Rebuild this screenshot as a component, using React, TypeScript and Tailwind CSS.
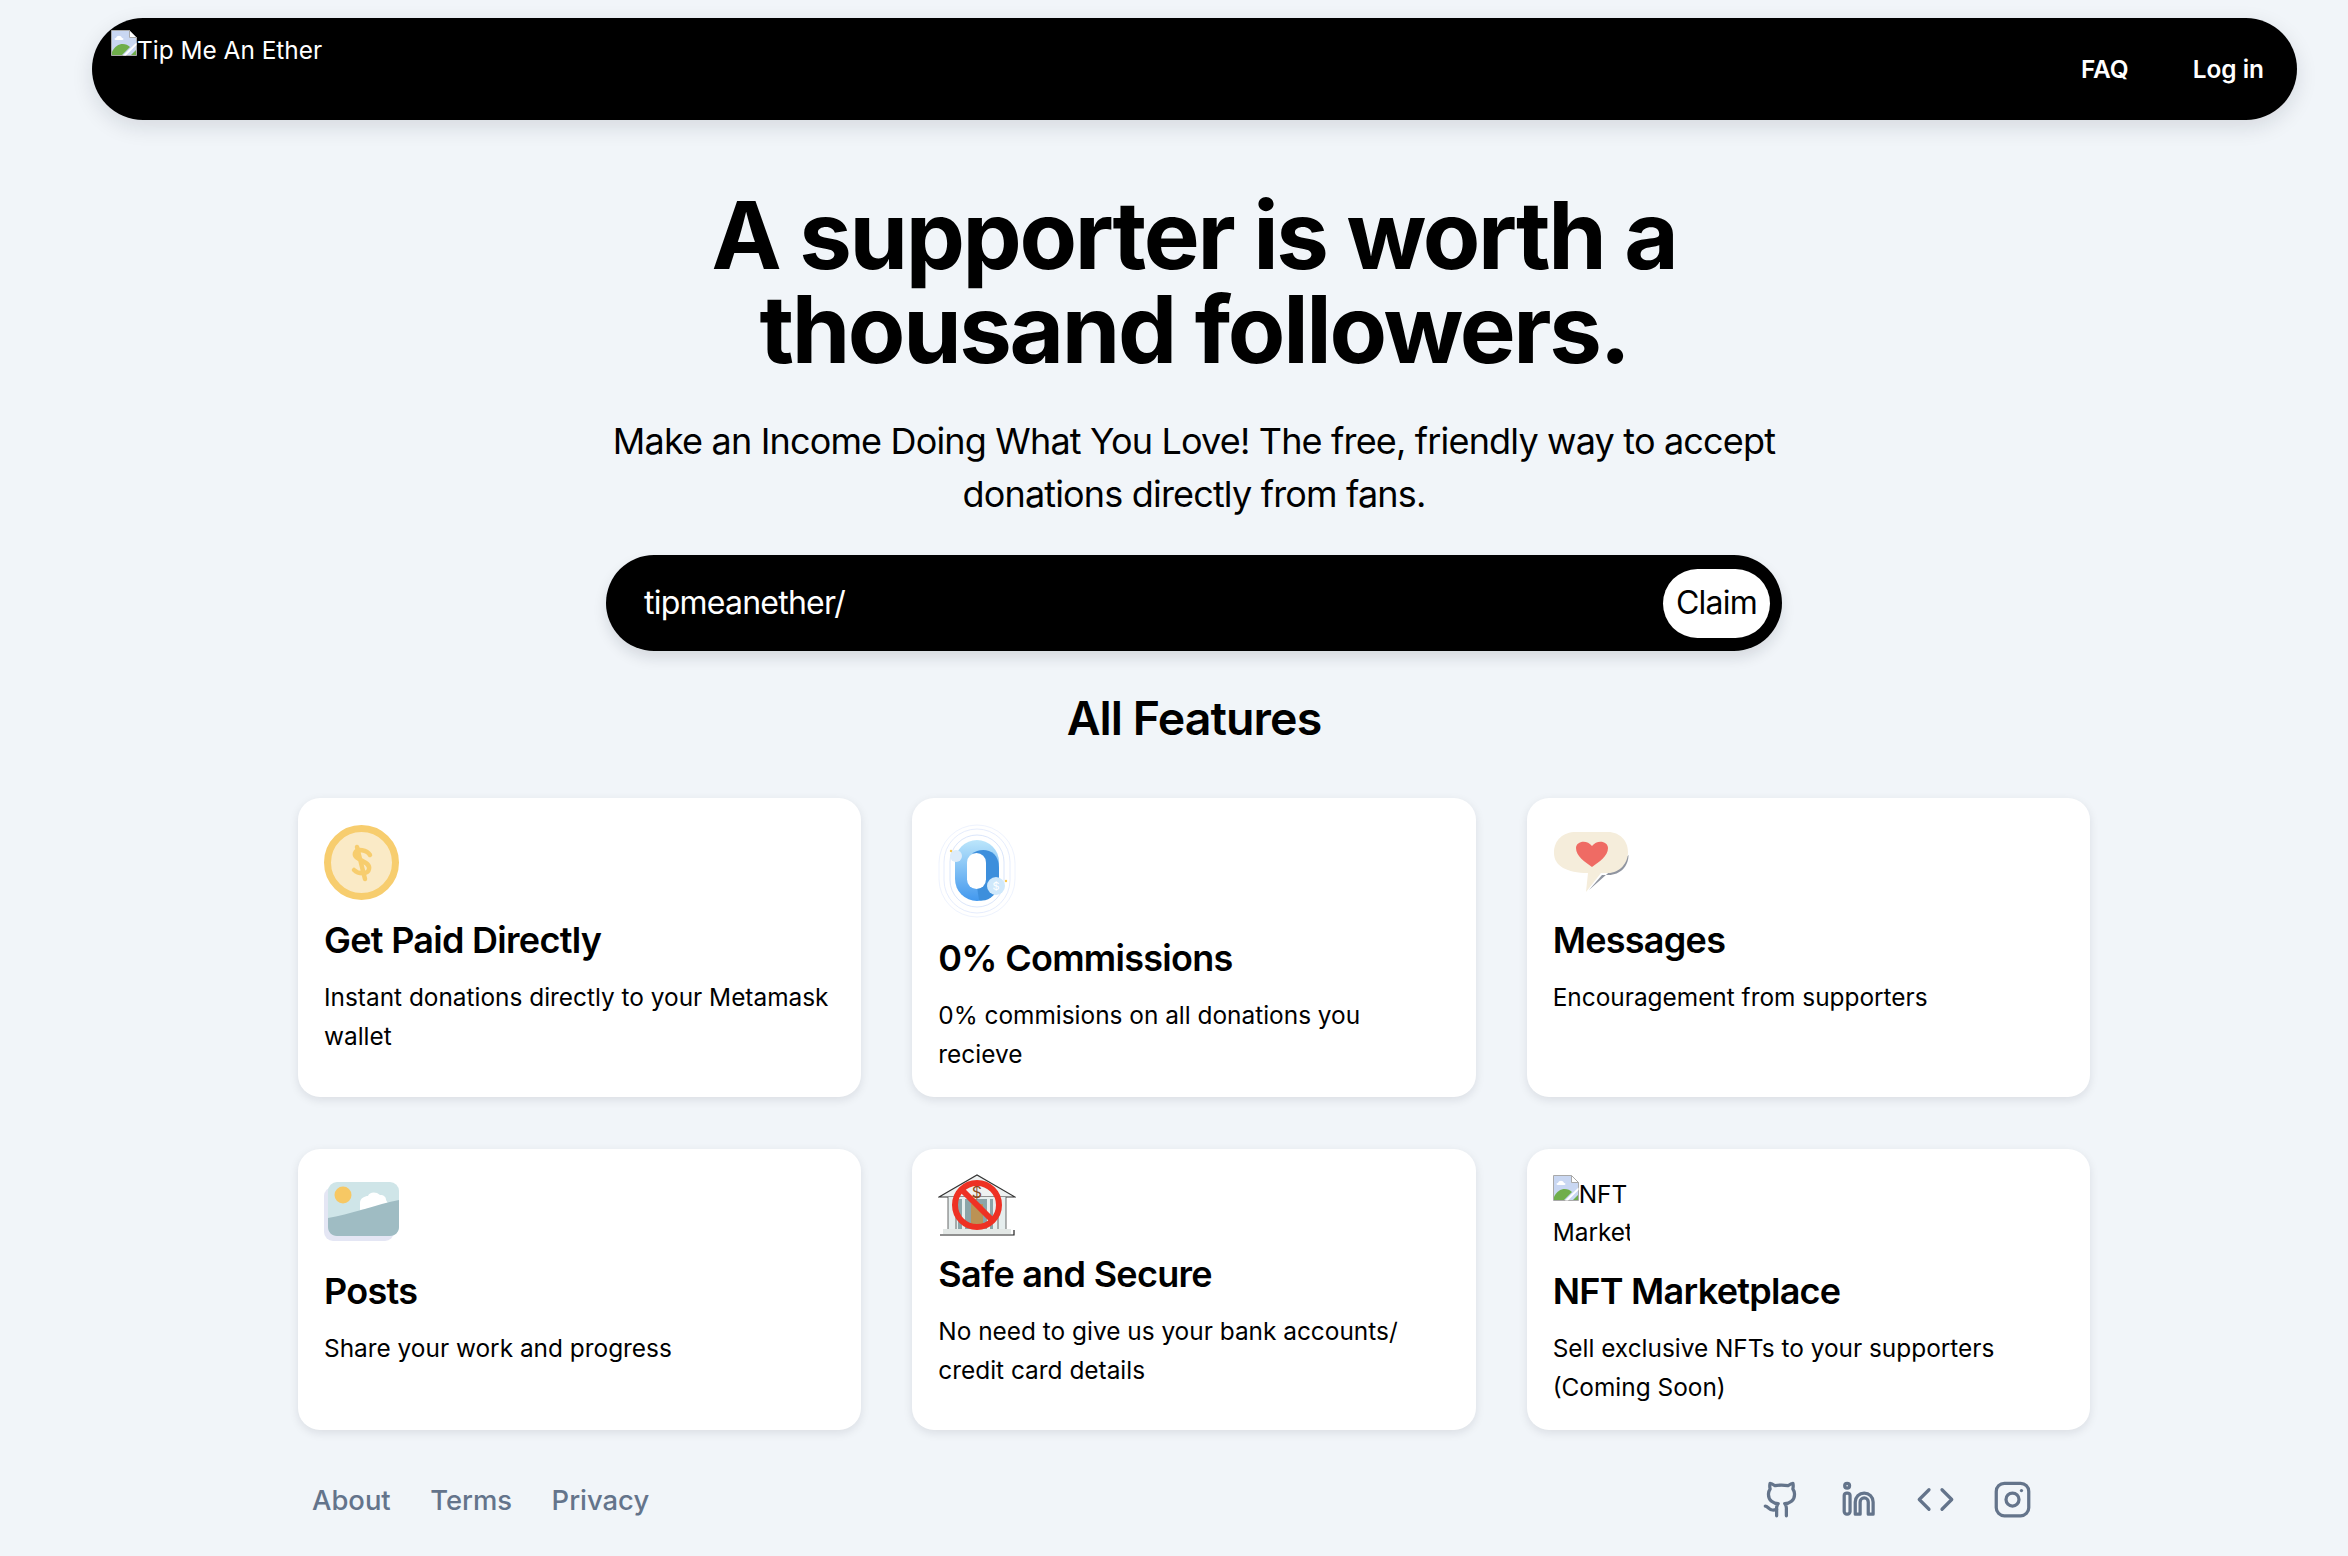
const font = "[font-family:Inter,'Liberation_Sans',sans-serif]";

function BrokenImage() {
  return (
    <svg viewBox="0 0 26 26" className="w-[26px] h-[26px] shrink-0">
      <path d="M.5.5h18l7 7v18H.5z" fill="#c9d7f2" stroke="#a9a9a9" strokeWidth="1" />
      <path d="M18.5.5v7h7z" fill="#fff" stroke="#a9a9a9" strokeWidth="1" />
      <path d="M5 8c1-3 5-3 6 0 2 0 2 2 0 2H5c-2 0-2-2 0-2z" fill="#fff" />
      <path d="M1 25v-3c4-9 13-10 18-5l-8 8z" fill="#6fae4b" />
      <path d="M12 25.5l13.5-13v2.5L15 25.5z" fill="#fff" />
      <path d="M20 25l5-5v5z" fill="#6fae4b" />
    </svg>
  );
}

function CoinIcon() {
  return (
    <svg viewBox="0 0 75 75" className="w-[75px] h-[75px]">
      <circle cx="37.5" cy="37.5" r="34" fill="#faeac6" stroke="#f7cd6e" strokeWidth="7" />
      <path d="M46 30c-3-5-13-7-15-2-2 7 16 8 14 16-1 6-11 5-15 1M33 22l8 32" fill="none" stroke="#f7cd6e" strokeWidth="4.5" strokeLinecap="round" />
    </svg>
  );
}

function ZeroIcon() {
  return (
    <svg viewBox="0 0 78 94" className="w-[78px] h-[94px]">
      <defs>
        <linearGradient id="zeroFill" x1="0" y1="0" x2="0" y2="1">
          <stop offset="0" stopColor="#bce6fb" />
          <stop offset="1" stopColor="#4298ee" />
        </linearGradient>
      </defs>
      <rect x="1" y="1" width="76" height="92" rx="38" fill="none" stroke="#eef3fe" />
      <rect x="6" y="5" width="66" height="84" rx="33" fill="none" stroke="#e6edfd" />
      <rect x="12" y="11" width="54" height="72" rx="27" fill="none" stroke="#dbe6fb" />
      <rect x="17" y="16" width="44" height="61" rx="22" fill="url(#zeroFill)" />
      <path d="M34 30c8-7 27-6 27 14v14c0 12-12 21-20 18z" fill="#3d8fdc" />
      <rect x="29" y="29" width="19" height="36" rx="9.5" fill="#fff" />
      <circle cx="58" cy="62" r="9" fill="#cfe8fb" />
      <text x="58" y="66" fontSize="11" textAnchor="middle" fill="#fff" fontFamily="Inter, sans-serif">$</text>
      <circle cx="18" cy="32" r="6" fill="#dcecfa" />
      <circle cx="13" cy="27" r="1.2" fill="#f9c74f" />
      <circle cx="68" cy="57" r="1.2" fill="#f9c74f" />
    </svg>
  );
}

function ChatHeartIcon() {
  return (
    <svg viewBox="0 0 78 64" className="w-[78px] h-[64px]">
      <path d="M75.5 25c0 11-8 20-20 20H49L36 60z" fill="#6b7280" opacity=".75" />
      <path d="M1 23C1 10 10 2 23 2h32c12 0 20 9 20 20s-8 21-20 21H48L33 62l2-19C14 43 1 36 1 23z" fill="#f5eddb" />
      <path d="M39 37C32 32 23 26 23 18c0-7 11-9 16-2 5-7 16-5 16 2 0 8-9 14-16 19z" fill="#ef6b64" />
    </svg>
  );
}

function PhotoIcon() {
  return (
    <svg viewBox="0 0 76 60" className="w-[76px] h-[60px]">
      <rect x="0" y="6" width="70" height="54" rx="9" fill="#e4e6f4" />
      <rect x="4" y="1" width="71" height="54" rx="9" fill="#cfe5e8" />
      <circle cx="19" cy="14" r="8.5" fill="#f7c864" />
      <path d="M36 22c0-5 5-7 8-7 1-4 8-5 12-1 4 0 6 2 6 5l3 5-29 5z" fill="#fff" />
      <path d="M4 37c20-3 50-14 71-18v27c0 5-4 9-9 9H13c-5 0-9-4-9-9z" fill="#9fbcc3" />
    </svg>
  );
}

function BankIcon() {
  return (
    <svg viewBox="0 0 78 62" className="w-[78px] h-[62px]">
      <path d="M1 23L39 1l38 22z" fill="#eef1f1" stroke="#333" strokeWidth="1.2" />
      <rect x="10" y="23" width="58" height="32" fill="#e6eeee" />
      <rect x="20" y="25" width="38" height="30" fill="#8ba4a8" />
      <path d="M24 25h3v30h-3zM49 25h3v30h-3zM55 25h3v30h-3z" fill="#e6eeee" />
      <rect x="33" y="30" width="12" height="25" fill="#bb9255" />
      <path d="M10 23v32M18 23v32M60 23v32M68 23v32" stroke="#444" strokeWidth=".8" />
      <path d="M5 55h68v5H5z" fill="#e3e8e6" />
      <path d="M2 61h74v-5" fill="none" stroke="#222" strokeWidth="1.2" />
      <text x="39" y="24" fontSize="16" textAnchor="middle" fill="#8a4b22" fontFamily="Inter, sans-serif">$</text>
      <circle cx="39" cy="31" r="22" fill="none" stroke="#ee3124" strokeWidth="6" />
      <path d="M24 16l30 30" stroke="#ee3124" strokeWidth="6" />
    </svg>
  );
}

function NftIcon() {
  return (
    <div className="w-[77px] h-[80px] overflow-hidden text-[24.4px] text-black whitespace-nowrap">
      <div className="flex items-start h-[38px] leading-[38px]">
        <BrokenImage />
        <span>NFT</span>
      </div>
      <div className="leading-[39px]">Market</div>
    </div>
  );
}

function GithubIcon() {
  return (
    <svg viewBox="0 0 24 24" className="w-[39px] h-[39px]" fill="none" stroke="currentColor" strokeWidth="2" strokeLinecap="round" strokeLinejoin="round">
      <path d="M15 22v-4a4.8 4.8 0 0 0-1-3.5c3 0 6-2 6-5.5.08-1.25-.27-2.48-1-3.5.28-1.15.28-2.35 0-3.5 0 0-1 0-3 1.5-2.64-.5-5.36-.5-8 0C6 2 5 2 5 2c-.3 1.15-.3 2.35 0 3.5A5.403 5.403 0 0 0 4 9c0 3.5 3 5.5 6 5.5-.39.49-.68 1.05-.85 1.65-.17.6-.22 1.23-.15 1.85v4" />
      <path d="M9 18c-4.51 2-5-2-7-2" />
    </svg>
  );
}

function LinkedinIcon() {
  return (
    <svg viewBox="0 0 24 24" className="w-[39px] h-[39px]" fill="none" stroke="currentColor" strokeWidth="2" strokeLinecap="round" strokeLinejoin="round">
      <circle cx="5" cy="3.5" r="1.5" />
      <rect x="3.2" y="8" width="3.6" height="13" rx="1.6" />
      <path d="M10 21V13.5a5.5 5.5 0 0 1 11 0V21h-3v-7.5a2.5 2.5 0 0 0-5 0V21z" />
    </svg>
  );
}

function CodeIcon() {
  return (
    <svg viewBox="0 0 24 24" className="w-[39px] h-[39px]" fill="none" stroke="currentColor" strokeWidth="2" strokeLinecap="round" strokeLinejoin="round">
      <path d="m16 18 6-6-6-6" />
      <path d="m8 6-6 6 6 6" />
    </svg>
  );
}

function InstagramIcon() {
  return (
    <svg viewBox="0 0 24 24" className="w-[39px] h-[39px]" fill="none" stroke="currentColor" strokeWidth="2" strokeLinecap="round" strokeLinejoin="round">
      <rect x="2" y="2" width="20" height="20" rx="5" />
      <circle cx="12" cy="12" r="4" />
      <path d="M17.5 6.5h.01" />
    </svg>
  );
}

const features = [
  { title: 'Get Paid Directly', text: 'Instant donations directly to your Metamask wallet', icon: <CoinIcon />, box: 'h-[80px] pt-[1px]' },
  { title: '0% Commissions', text: '0% commisions on all donations you recieve', icon: <ZeroIcon />, box: 'h-[98px]' },
  { title: 'Messages', text: 'Encouragement from supporters', icon: <ChatHeartIcon />, box: 'h-[80px] pt-[6px]' },
  { title: 'Posts', text: 'Share your work and progress', icon: <PhotoIcon />, box: 'h-[80px] pt-[6px]' },
  { title: 'Safe and Secure', text: 'No need to give us your bank accounts/ credit card details', icon: <BankIcon />, box: 'h-[64px] -mt-[1px]' },
  { title: 'NFT Marketplace', text: 'Sell exclusive NFTs to your supporters (Coming Soon)', icon: <NftIcon />, box: 'h-[80px]' },
];

export default function App() {
  return (
    <div className={`min-h-screen bg-[#f1f5f9] pl-[92px] pr-[51px] pt-[18px] text-black ${font}`}>
      <nav className="h-[102px] rounded-full bg-black text-white text-[24.4px] flex justify-between shadow-[0_7px_21px_rgba(15,23,42,0.12)]">
        <div className="pl-[19px] pt-[12px] flex items-start h-fit">
          <BrokenImage />
          <span className="leading-[31px] pt-[5px]">Tip Me An Ether</span>
        </div>
        <div className="flex items-center gap-[64px] pr-[33px] font-semibold text-[24.4px]">
          <span>FAQ</span>
          <span>Log in</span>
        </div>
      </nav>

      <main className="flex flex-col items-center pr-[1px]">
        <h1 className="mt-[68px] text-[94px] leading-[94px] font-bold tracking-[-0.025em] text-center">
          A supporter is worth a<br />thousand followers.
        </h1>
        <p className="mt-[39px] text-[36px] leading-[52.5px] tracking-[-0.023em] text-center">
          Make an Income Doing What You Love! The free, friendly way to accept<br />donations directly from fans.
        </p>
        <div className="mt-[35px] w-[1176px] h-[96px] rounded-full bg-black flex items-center justify-between pl-[38px] pr-[12px] text-white text-[32px] tracking-[-0.024em] shadow-[0_7px_14px_rgba(15,23,42,0.12)]">
          <span>tipmeanether/</span>
          <span className="w-[107px] h-[69px] rounded-full bg-white text-black flex items-center justify-center">Claim</span>
        </div>
        <h2 className="mt-[39px] text-[46.5px] leading-[56px] font-semibold tracking-[-0.02em]">All Features</h2>

        <div className="mt-[52px] w-[1792px] grid grid-cols-3 gap-x-[51px] gap-y-[52px]">
          {features.map((f) => (
            <div key={f.title} className="bg-white rounded-[22px] p-[26px] pb-[24px] shadow-[0_3px_10px_rgba(15,23,42,0.1)]">
              <div className={f.box}>{f.icon}</div>
              <h3 className="mt-[8px] text-[36px] leading-[56px] font-semibold tracking-[-0.02em] whitespace-nowrap">{f.title}</h3>
              <p className="mt-[10px] text-[24.4px] leading-[38.5px]">{f.text}</p>
            </div>
          ))}
        </div>

        <footer className="mt-[43px] w-[1792px] h-[56px] flex items-center justify-between pl-[14px] pr-[58px] text-[#64748b]">
          <div className="flex gap-[39.5px] text-[27.4px] font-medium">
            <span>About</span>
            <span>Terms</span>
            <span>Privacy</span>
          </div>
          <div className="flex gap-[38px] pb-[3px]">
            <GithubIcon />
            <LinkedinIcon />
            <CodeIcon />
            <InstagramIcon />
          </div>
        </footer>
      </main>
    </div>
  );
}
